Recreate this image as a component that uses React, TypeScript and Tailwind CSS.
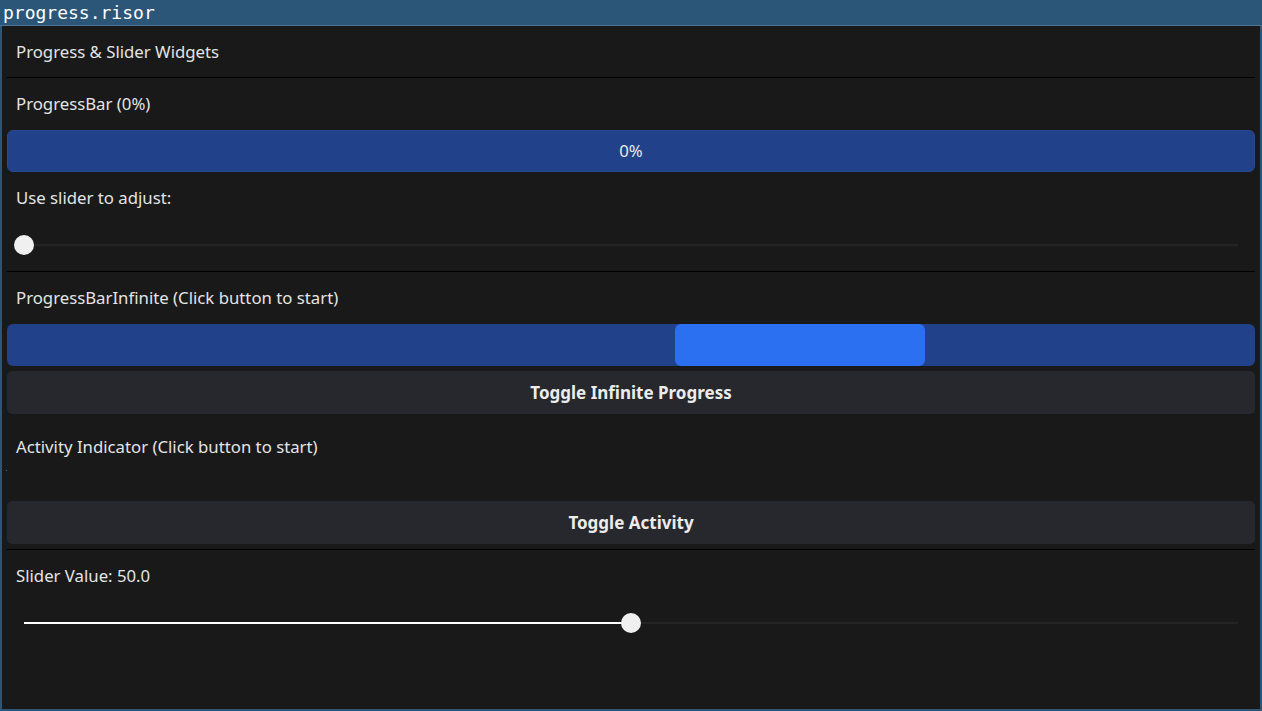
import React from 'react'

const font = { fontFamily: '"Noto Sans", "Open Sans", sans-serif' }

function Separator() {
  return <div className="h-px bg-black" />
}

function Label({ children }: { children: React.ReactNode }) {
  return (
    <div className="h-[52px] flex items-center pl-[9px] text-[16.75px] text-[#e4e4e4]">
      {children}
    </div>
  )
}

function Slider({ value }: { value: number }) {
  return (
    <div className="relative h-[47px]">
      <div className="absolute left-[17px] right-[17px] top-[20px] h-[2px] bg-[#242424]">
        <div className="absolute left-0 top-0 h-[2px] bg-white" style={{ width: `${value}%` }} />
        <div
          className="absolute top-[-9px] w-[20px] h-[20px] -ml-[10px] rounded-full bg-[#f0f0f0]"
          style={{ left: `${value}%` }}
        />
      </div>
    </div>
  )
}

function Button({ children }: { children: React.ReactNode }) {
  return (
    <div className="h-[43px] rounded-[5px] bg-[#27282d] flex items-center justify-center text-[17px] font-bold text-[#ececec]">
      {children}
    </div>
  )
}

export default function App() {
  return (
    <div className="w-[1262px] h-[711px] flex flex-col bg-[#2b5677] overflow-hidden" style={font}>
      <div
        className="h-[26px] border-b border-[#4a7795] pl-[3px] flex items-center text-[18px] text-white leading-none"
        style={{ fontFamily: '"DejaVu Sans Mono", monospace' }}
      >
        progress.risor
      </div>
      <div className="flex-1 mx-[2px] mb-[2px] bg-[#191919] px-[5px] flex flex-col">
        <div className="h-[51px] flex items-center pl-[9px] text-[16.75px] text-[#e4e4e4]">
          Progress &amp; Slider Widgets
        </div>
        <Separator />
        <Label>ProgressBar (0%)</Label>
        <div className="h-[42px] rounded-[6px] bg-[#21428a] border border-[#2a4a90] flex items-center justify-center text-[16.75px] text-[#e8e8e8]">
          0%
        </div>
        <Label>Use slider to adjust:</Label>
        <Slider value={0} />
        <Separator />
        <Label>ProgressBarInfinite (Click button to start)</Label>
        <div className="h-[42px] rounded-[6px] bg-[#21428a] flex">
          <div className="w-[668px]" />
          <div className="w-[250px] rounded-[6px] bg-[#2a70f0]" />
        </div>
        <div className="mt-[5px]">
          <Button>Toggle Infinite Progress</Button>
        </div>
        <div className="h-[87px] flex flex-col">
          <div className="mt-[21px] h-[24px] flex items-center pl-[9px] text-[16.75px] text-[#e4e4e4]">
            Activity Indicator (Click button to start)
          </div>
          <div className="mt-[11px] -ml-[1px] w-px h-px bg-[#5a6a78]" />
        </div>
        <Button>Toggle Activity</Button>
        <div className="mt-[5px]">
          <Separator />
        </div>
        <Label>Slider Value: 50.0</Label>
        <Slider value={50} />
      </div>
    </div>
  )
}
